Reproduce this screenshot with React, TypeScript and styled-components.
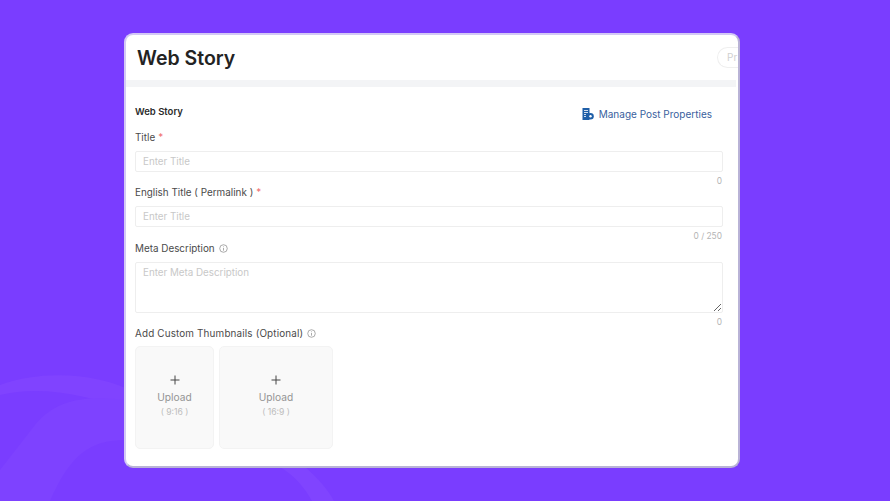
import React from "react";
import styled, { createGlobalStyle } from "styled-components";

const Global = createGlobalStyle`
  html, body { margin: 0; padding: 0; width: 890px; height: 501px; overflow: hidden; }
  body { font-family: Inter, "Open Sans", sans-serif; background: #7a3dff; }
  * { box-sizing: border-box; }
`;

const Page = styled.main`
  position: relative;
  width: 890px;
  height: 501px;
  padding: 33px 0 0 124px;
  background: #7a3dff;
  overflow: hidden;
`;

const Backdrop = styled.svg`
  position: absolute;
  inset: 0;
`;

const Card = styled.section`
  position: relative;
  width: 616px;
  height: 435px;
  background: #fff;
  border: 2px solid #d3c8f5;
  border-right-color: #b9b3d6;
  border-bottom-color: #b9b3d6;
  border-radius: 9px;
  overflow: hidden;
`;

const Header = styled.header`
  height: 45px;
  padding: 8px 0 0 11px;
  display: flex;
  justify-content: space-between;
  align-items: flex-start;
`;

const PageTitle = styled.h1`
  margin: 0;
  font-size: 19.5px;
  line-height: 30px;
  font-weight: 600;
  color: #232323;
`;

const Pill = styled.div`
  width: 21px;
  height: 21px;
  margin-top: 4px;
  padding-left: 9px;
  border: 1px solid #efefef;
  border-right: none;
  border-radius: 11px 0 0 11px;
  font-size: 10px;
  line-height: 19px;
  color: #d0d0d0;
  overflow: hidden;
`;

const Band = styled.div`
  height: 7px;
  margin-right: 2px;
  background: #f3f4f6;
`;

const Body = styled.div`
  padding: 18px 15px 0 9px;
`;

const TopRow = styled.div`
  display: flex;
  justify-content: space-between;
  align-items: flex-start;
  padding-right: 11px;
  height: 24px;
`;

const SectionTitle = styled.h2`
  margin: 0;
  font-size: 9.5px;
  line-height: 14px;
  font-weight: 600;
  color: #2b2b2b;
`;

const ManageLink = styled.a`
  display: flex;
  align-items: center;
  gap: 5px;
  font-size: 10px;
  line-height: 16px;
  margin-top: 1px;
  color: #3a5f9e;
`;

const Label = styled.label<{ $spread?: number }>`
  display: flex;
  align-items: center;
  gap: 3px;
  height: 16px;
  font-size: 9.9px;
  letter-spacing: ${(p) => p.$spread ?? 0}px;
  color: #4a4a4a;
`;

const Star = styled.span`
  color: #f07070;
`;

const TextInput = styled.input`
  display: block;
  width: 100%;
  height: 21px;
  margin-top: 6px;
  padding: 0 7px;
  border: 1px solid #eeeeee;
  border-radius: 2px;
  outline: none;
  background: #fff;
  font-family: inherit;
  font-size: 9.8px;
  &::placeholder { color: #c8c8c8; opacity: 1; }
`;

const TextArea = styled.textarea`
  display: block;
  width: 100%;
  height: 51px;
  margin-top: 6px;
  padding: 3px 7px;
  border: 1px solid #eeeeee;
  border-radius: 2px;
  outline: none;
  resize: vertical;
  font-family: inherit;
  font-size: 9.8px;
  line-height: 14px;
  &::placeholder { color: #c8c8c8; opacity: 1; }
`;

const Counter = styled.div`
  height: 12px;
  padding: 4px 1px 0 0;
  font-size: 8.4px;
  line-height: 11px;
  color: #b4b4b4;
  text-align: right;
`;

const Field = styled.div<{ $gap?: number }>`
  margin-bottom: ${(p) => p.$gap ?? 0}px;
`;

const Uploads = styled.div`
  display: flex;
  gap: 5px;
  margin-top: 5px;
`;

const UploadBox = styled.div<{ $w: number }>`
  width: ${(p) => p.$w}px;
  height: 103px;
  padding-top: 28px;
  display: flex;
  flex-direction: column;
  align-items: center;
  background: #f9f9f9;
  border: 1px solid #f3f3f3;
  border-radius: 5px;
`;

const Plus = styled.svg`
  width: 10px;
  height: 10px;
  margin-bottom: 5px;
`;

const UploadText = styled.span`
  font-size: 10.2px;
  line-height: 15px;
  color: #949494;
`;

const Ratio = styled.span`
  font-size: 8.6px;
  line-height: 15px;
  color: #bdbdbd;
`;

const InfoIcon = () => (
  <svg width="9" height="9" viewBox="0 0 10 10" fill="none" stroke="#8a8a8a" strokeWidth="0.8" style={{ marginLeft: 1 }}>
    <circle cx="5" cy="5" r="4.2" />
    <path d="M5 4.4V7.4M5 2.7V3.5" />
  </svg>
);

const PropsIcon = () => (
  <svg width="12" height="12" viewBox="0 0 12 12">
    <path d="M0.5 0H7.5V12H0.5Z" fill="#1f5fa8" />
    <path d="M2 2.5H6M2 4.5H6M2 6.5H4M2 8.5H4" stroke="#fff" strokeWidth="0.8" />
    <circle cx="8.5" cy="8.3" r="3.3" fill="#1f5fa8" />
    <circle cx="8.5" cy="8.3" r="1.2" fill="#fff" />
  </svg>
);

const PlusIcon = () => (
  <Plus viewBox="0 0 10 10" stroke="#444" strokeWidth="1">
    <path d="M5 .5V9.5M.5 5H9.5" />
  </Plus>
);

export default function App() {
  return (
    <>
      <Global />
      <Page>
        <Backdrop width="890" height="501" viewBox="0 0 890 501" fill="none">
          <path d="M0 385C40 370 95 372 135 392L125 410C90 395 40 385 0 395Z" fill="#8043ff" />
          <path d="M0 470L35 425C55 400 85 395 125 400L125 440C90 440 70 455 50 501H0Z" fill="#7e42ff" />
          <path d="M280 467H305C318 478 328 490 334 501H312C305 488 295 476 280 467Z" fill="#8044ff" />
        </Backdrop>
        <Card>
          <Header>
            <PageTitle>Web Story</PageTitle>
            <Pill>Pr</Pill>
          </Header>
          <Band />
          <Body>
            <TopRow>
              <SectionTitle>Web Story</SectionTitle>
              <ManageLink><PropsIcon />Manage Post Properties</ManageLink>
            </TopRow>
            <Field>
              <Label>Title <Star>*</Star></Label>
              <TextInput placeholder="Enter Title" />
              <Counter>0</Counter>
            </Field>
            <Field $gap={1}>
              <Label>English Title ( Permalink ) <Star>*</Star></Label>
              <TextInput placeholder="Enter Title" />
              <Counter>0 / 250</Counter>
            </Field>
            <Field>
              <Label>Meta Description <InfoIcon /></Label>
              <TextArea placeholder="Enter Meta Description" />
              <Counter>0</Counter>
            </Field>
            <Label $spread={0.15}>Add Custom Thumbnails (Optional) <InfoIcon /></Label>
            <Uploads>
              <UploadBox $w={79}>
                <PlusIcon />
                <UploadText>Upload</UploadText>
                <Ratio>( 9:16 )</Ratio>
              </UploadBox>
              <UploadBox $w={114}>
                <PlusIcon />
                <UploadText>Upload</UploadText>
                <Ratio>( 16:9 )</Ratio>
              </UploadBox>
            </Uploads>
          </Body>
        </Card>
      </Page>
    </>
  );
}
